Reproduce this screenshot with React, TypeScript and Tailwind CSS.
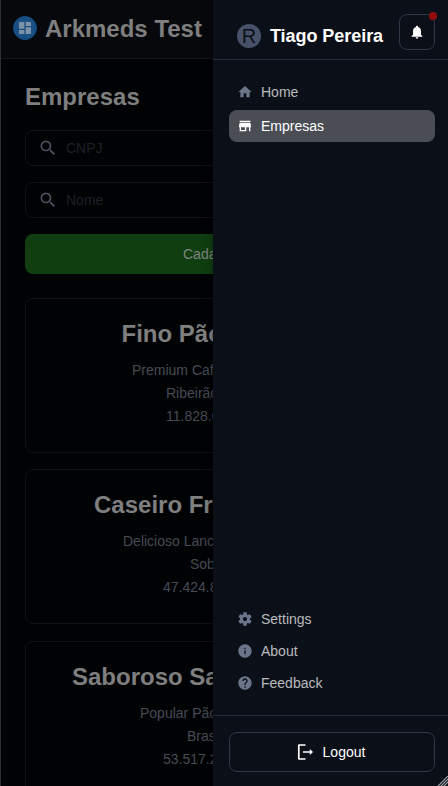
import type { ReactNode } from "react";
import { MdDashboard, MdHelp, MdInfo, MdNotifications, MdSearch } from "react-icons/md";

function Logo() {
  return (
    <span className="flex h-6 w-6 items-center justify-center rounded-full border border-[#0f4a86] bg-[#194f83] text-[#7d93a9]">
      <MdDashboard size={16} />
    </span>
  );
}

function SearchField({ label }: { label: string }) {
  return (
    <div className="flex h-9 items-center rounded-lg border border-[#101319] pl-3 text-[#1c2028]">
      <MdSearch size={20} className="mr-2 text-[#4c515b]" />
      <span>{label}</span>
    </div>
  );
}

type Line = { text: string; indent: string };

function CompanyCard({ title, lines }: { title: Line; lines: Line[] }) {
  return (
    <div className="h-[155px] shrink-0 rounded-lg border border-[#101217] pt-[17px] whitespace-nowrap">
      <h2 className={`text-2xl leading-9 font-bold text-[#7f7f7f] ${title.indent}`}>{title.text}</h2>
      <div className="mt-[7px] text-[#464b54]">
        {lines.map((line) => (
          <p key={line.text} className={`leading-[23px] ${line.indent}`}>
            {line.text}
          </p>
        ))}
      </div>
    </div>
  );
}

function SolidIcon({ path }: { path: string }) {
  return (
    <svg width="16" height="16" viewBox="0 0 24 24" fill="currentColor">
      <path d={path} />
    </svg>
  );
}

const homePath = "M10 20v-6h4v6h5v-8h3L12 3 2 12h3v8z";
const storePath = "M20 4H4v2h16V4zm1 10v-2l-1-5H4l-1 5v2h1v6h10v-6h4v6h2v-6h1zm-9 4H6v-4h6v4z";
const settingsPath =
  "M19.43 12.98c.04-.32.07-.64.07-.98s-.03-.66-.07-.98l2.11-1.65c.19-.15.24-.42.12-.64l-2-3.46c-.12-.22-.39-.3-.61-.22l-2.49 1c-.52-.4-1.08-.73-1.69-.98l-.38-2.65C14.46 2.18 14.25 2 14 2h-4c-.25 0-.46.18-.49.42l-.38 2.65c-.61.25-1.17.59-1.69.98l-2.49-1c-.23-.09-.49 0-.61.22l-2 3.46c-.13.22-.07.49.12.64l2.11 1.65c-.04.32-.07.65-.07.98s.03.66.07.98l-2.11 1.65c-.19.15-.24.42-.12.64l2 3.46c.12.22.39.3.61.22l2.49-1c.52.4 1.08.73 1.69.98l.38 2.65c.03.24.24.42.49.42h4c.25 0 .46-.18.49-.42l.38-2.65c.61-.25 1.17-.59 1.69-.98l2.49 1c.23.09.49 0 .61-.22l2-3.46c.12-.22.07-.49-.12-.64l-2.11-1.65zM12 15.1c-1.71 0-3.1-1.39-3.1-3.1s1.39-3.1 3.1-3.1 3.1 1.39 3.1 3.1-1.39 3.1-3.1 3.1z";

function MenuItem({ icon, label, active }: { icon: ReactNode; label: string; active?: boolean }) {
  return (
    <div
      className={`flex h-8 items-center rounded-lg pl-2 ${
        active ? "bg-[#4a4d54] text-white" : "text-[#b9bbbe]"
      }`}
    >
      <span className={`mr-2 flex w-4 justify-center ${active ? "text-white" : "text-[#6b758a]"}`}>{icon}</span>
      {label}
    </div>
  );
}

function LogoutIcon() {
  return (
    <svg width="17" height="18" viewBox="0 0 17 18" fill="none" className="text-white">
      <path d="M8.5 2H2.3Q1.8 2 1.8 2.5V15.5Q1.8 16 2.3 16H8.5" stroke="currentColor" strokeWidth="1.7" />
      <path d="M6 9H14" stroke="currentColor" strokeWidth="1.5" />
      <path d="M12.8 6L16 9L12.8 12Z" fill="currentColor" />
    </svg>
  );
}

function Page() {
  return (
    <div className="flex h-full w-[213px] shrink-0 flex-col overflow-hidden border-l border-[#2f2f2f] bg-[#010204]">
      <header className="flex h-[59px] shrink-0 items-center border-b border-[#121419] bg-[#06080b] pl-3">
        <div className="mb-0.5">
          <Logo />
        </div>
        <h1 className="ml-2 text-2xl font-bold whitespace-nowrap text-[#7f7f7f]">Arkmeds Test</h1>
      </header>
      <main className="flex w-[424px] flex-col px-6 pt-5">
        <h2 className="text-2xl leading-9 font-bold text-[#7f7f7f]">Empresas</h2>
        <div className="mt-[15px] flex flex-col gap-4">
          <SearchField label="CNPJ" />
          <SearchField label="Nome" />
          <div className="flex h-10 items-center rounded-lg bg-[#103e10] pl-[158px] text-[#7f857f]">Cadastrar</div>
        </div>
        <div className="mt-6 flex flex-col gap-[16.4px]">
          <CompanyCard
            title={{ text: "Fino Pão", indent: "pl-[95.5px]" }}
            lines={[
              { text: "Premium Café", indent: "pl-[106px]" },
              { text: "Ribeirão", indent: "pl-[140px]" },
              { text: "11.828.0", indent: "pl-[140px]" },
            ]}
          />
          <CompanyCard
            title={{ text: "Caseiro Fr", indent: "pl-[68px]" }}
            lines={[
              { text: "Delicioso Lanches", indent: "pl-[97px]" },
              { text: "Sobral", indent: "pl-[164px]" },
              { text: "47.424.8", indent: "pl-[137px]" },
            ]}
          />
          <CompanyCard
            title={{ text: "Saboroso Sa", indent: "pl-[46px]" }}
            lines={[
              { text: "Popular Pão", indent: "pl-[114px]" },
              { text: "Brasília", indent: "pl-[161px]" },
              { text: "53.517.2", indent: "pl-[137px]" },
            ]}
          />
        </div>
      </main>
    </div>
  );
}

function Drawer() {
  return (
    <aside className="relative flex h-full flex-1 flex-col bg-[#0b1018] shadow-[0_8px_10px_0_rgba(0,0,0,0.3)]">
      <header className="flex h-[60px] shrink-0 items-start border-b border-[#252a36] pr-[13px] pl-6">
        <span className="mt-6 flex h-6 w-6 items-center justify-center rounded-full bg-[#475269] pb-px text-xl leading-6 text-[#0b1018]">
          R
        </span>
        <span className="mt-[22px] ml-[9px] flex-1 text-lg leading-7 font-bold tracking-[-0.05px] whitespace-nowrap text-white">
          Tiago Pereira
        </span>
        <span className="relative mt-3.5 flex h-9 w-9 items-center justify-center rounded-lg border border-[#2f3748] text-white">
          <MdNotifications size={16} />
          <span className="absolute -top-[3px] -right-[3px] h-2 w-2 rounded-full bg-[#920d0d]" />
        </span>
      </header>
      <nav className="flex flex-1 flex-col gap-0.5 pt-4 pr-[13px] pl-4">
        <MenuItem icon={<SolidIcon path={homePath} />} label="Home" />
        <MenuItem icon={<SolidIcon path={storePath} />} label="Empresas" active />
      </nav>
      <nav className="flex flex-col pr-[13px] pb-4 pl-4">
        <MenuItem icon={<SolidIcon path={settingsPath} />} label="Settings" />
        <MenuItem icon={<MdInfo size={16} />} label="About" />
        <MenuItem icon={<MdHelp size={16} />} label="Feedback" />
      </nav>
      <footer className="h-[71px] shrink-0 border-t border-[#252a36] pt-4 pr-[13px] pl-4">
        <div className="flex h-10 items-center justify-center gap-[9px] rounded-lg border border-[#2f3748] pr-0.5 text-white">
          <LogoutIcon />
          Logout
        </div>
      </footer>
      <svg className="absolute right-0 bottom-0" width="11" height="10" viewBox="0 0 11 10" fill="none" stroke="#a5a7aa">
        <path d="M0.5 10.5L11.5 -0.5M3.5 10.5L11.5 2.5M6.5 10.5L11.5 5.5" strokeWidth="1.1" />
      </svg>
    </aside>
  );
}

export default function App() {
  return (
    <div className="flex h-[786px] w-[448px] overflow-hidden bg-[#010204] font-['Liberation_Sans',Arial,sans-serif] text-sm">
      <Page />
      <Drawer />
    </div>
  );
}
